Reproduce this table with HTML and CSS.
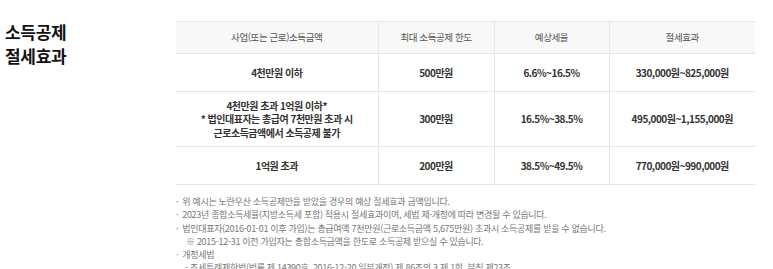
FILE: index.html
```html
<!DOCTYPE html>
<html lang="ko">
<head>
<meta charset="utf-8">
<link rel="stylesheet" href="styles.css">
</head>
<body>
<div class="wrap">
  <h2 class="title">소득공제<br>절세효과</h2>
  <div class="content">
    <table class="tbl">
      <colgroup>
        <col class="c1"><col class="c2"><col class="c3"><col class="c4">
      </colgroup>
      <thead>
        <tr>
          <th>사업(또는 근로)소득금액</th>
          <th>최대 소득공제 한도</th>
          <th>예상세율</th>
          <th>절세효과</th>
        </tr>
      </thead>
      <tbody>
        <tr class="r1">
          <td>4천만원 이하</td>
          <td>500만원</td>
          <td>6.6%~16.5%</td>
          <td>330,000원~825,000원</td>
        </tr>
        <tr class="r2">
          <td>4천만원 초과 1억원 이하*<br>* 법인대표자는 총급여 7천만원 초과 시<br>근로소득금액에서 소득공제 불가</td>
          <td>300만원</td>
          <td>16.5%~38.5%</td>
          <td>495,000원~1,155,000원</td>
        </tr>
        <tr class="r3">
          <td>1억원 초과</td>
          <td>200만원</td>
          <td>38.5%~49.5%</td>
          <td>770,000원~990,000원</td>
        </tr>
      </tbody>
    </table>
    <ul class="notes">
      <li>위 예시는 노란우산 소득공제만을 받았을 경우의 예상 절세효과 금액입니다.</li>
      <li>2023년 종합소득세율(지방소득세 포함) 적용시 절세효과이며, 세법 제·개정에 따라 변경될 수 있습니다.</li>
      <li>법인대표자(2016-01-01 이후 가입)는 총급여액 7천만원(근로소득금액 5,675만원) 초과시 소득공제를 받을 수 없습니다.</li>
      <li class="sub">※ 2015-12-31 이전 가입자는 총합소득금액을 한도로 소득공제 받으실 수 있습니다.</li>
      <li>개정세법</li>
      <li class="sub2">- 조세특례제한법(법률 제 14390호, 2016-12-20 일부개정) 제 86조의 3 제 1항, 부칙 제23조</li>
    </ul>
  </div>
</div>
</body>
</html>
```
FILE: styles.css
```css
* { box-sizing: border-box; }
html, body { margin: 0; padding: 0; background: #fff; }
body {
  font-family: "Noto Sans CJK KR", "Noto Sans", sans-serif;
  color: #333;
  overflow: hidden;
}
.wrap {
  display: flex;
  align-items: flex-start;
}
.title {
  width: 176px;
  flex: none;
  margin: 0;
  padding: 20px 0 0 5px;
  font-size: 17px;
  line-height: 24px;
  font-weight: 700;
  color: #111;
  letter-spacing: -0.3px;
}
.content {
  width: 579px;
  padding-top: 21px;
}
.tbl {
  width: 579px;
  border-collapse: collapse;
  table-layout: fixed;
  font-size: 10px;
  line-height: 13.5px;
  border-top: 1px solid #e6e6e6;
}
.c1 { width: 202px; }
.c2 { width: 116px; }
.c3 { width: 115px; }
.c4 { width: 146px; }
.tbl th {
  background: #f8f8f8;
  font-weight: 400;
  font-size: 9.5px;
  letter-spacing: -0.4px;
  color: #555;
  height: 32px;
  padding: 0;
  border-bottom: 1px solid #e6e6e6;
  border-left: 1px solid #e6e6e6;
}
.tbl td {
  text-align: center;
  font-weight: 700;
  letter-spacing: -0.5px;
  color: #333;
  padding: 0;
  border-bottom: 1px solid #e6e6e6;
  border-left: 1px solid #e6e6e6;
}
.tbl th:first-child, .tbl td:first-child { border-left: none; }
.r1 td { height: 38px; }
.r2 td { height: 55px; }
.r3 td { height: 38px; }
.notes {
  list-style: none;
  margin: 10px 0 0;
  padding: 0;
  font-size: 9px;
  line-height: 13.3px;
  letter-spacing: -0.3px;
  color: #777;
}
.notes li { white-space: nowrap; }
.notes li::before { content: "·"; margin-right: 4px; }
.notes li.sub { padding-left: 10px; }
.notes li.sub::before, .notes li.sub2::before { content: none; }
.notes li.sub2 { padding-left: 9px; }
```
